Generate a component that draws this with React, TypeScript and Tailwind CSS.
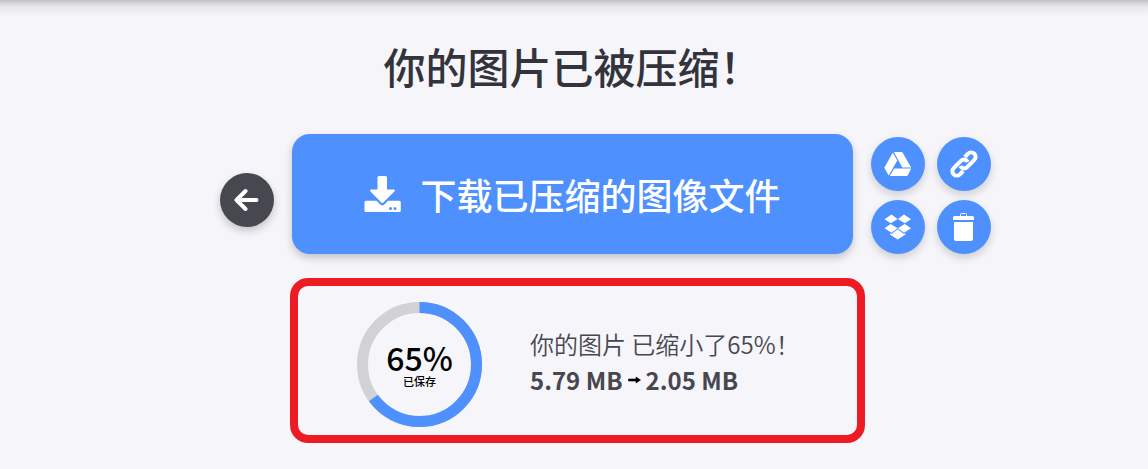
import React from "react";

const SAVED = 65;

function BackIcon() {
  return (
    <svg className="h-6 w-[26px]" viewBox="0 0 26 24" fill="none" stroke="currentColor" strokeWidth="4" strokeLinecap="round" strokeLinejoin="round" aria-hidden="true">
      <path d="M11.500 3 L2.500 12 L11.500 21 M3 12 H22.500" />
    </svg>
  );
}

function DownloadIcon() {
  return (
    <svg className="h-9 w-[37px] shrink-0" viewBox="0 0 37 36" fill="currentColor" aria-hidden="true">
      <path d="M15 0h6.500a1.500 1.500 0 0 1 1.500 1.500V13.500h6.900a1 1 0 0 1 .7 1.700L19.400 26.600a1.500 1.500 0 0 1-2.100 0L6.300 15.200a1 1 0 0 1 .7-1.700H13.500V1.500A1.500 1.500 0 0 1 15 0Z" />
      <path fillRule="evenodd" d="M2 24.800H12.600l3.100 3.300a3.600 3.600 0 0 0 5.200 0l3.100-3.300H35.300A1.500 1.500 0 0 1 36.800 26.300V34.500A1.500 1.500 0 0 1 35.300 36H2A1.500 1.500 0 0 1 .5 34.500V26.300A1.500 1.500 0 0 1 2 24.800ZM26.500 31a1.500 1.500 0 1 0 0 3a1.500 1.500 0 0 0 0-3ZM31 31a1.500 1.500 0 1 0 0 3a1.500 1.500 0 0 0 0-3Z" />
    </svg>
  );
}

function DriveIcon() {
  return (
    <svg className="h-6 w-7" viewBox="0 0 28 24" fill="currentColor" aria-hidden="true">
      <path d="M8.700 0.800 L13.300 8.500 L4.700 23.500 L0.300 15.700Z" />
      <path d="M9.800 0H18.200L27.200 15.400H18.300Z" />
      <path d="M10.200 16.400H27.200L23.400 24H5.800Z" />
    </svg>
  );
}

function DropboxIcon() {
  return (
    <svg className="h-[26px] w-7" viewBox="0 0 28 26" fill="currentColor" aria-hidden="true">
      <path d="M7.500 0.500L13.600 5 6.700 9.300 0.500 5.200Z" />
      <path d="M20 0.500L13.900 5 20.800 9.300 27 5.200Z" />
      <path d="M6.700 9.900L13.600 14.200 7.500 18.700 0.500 14.200Z" />
      <path d="M20.800 9.900L13.900 14.200 20 18.700 27 14.200Z" />
      <path d="M13.700 15.300L20 20 21.500 19.200V20.600L13.700 25.500 6 20.600V19.200L7.500 20Z" />
    </svg>
  );
}

function LinkIcon() {
  return (
    <svg className="size-7" viewBox="-14 -14 28 28" fill="none" stroke="currentColor" strokeWidth="4" aria-hidden="true">
      <g transform="rotate(-45)">
        <path d="M5.500 -4.400H10.200A4.400 4.400 0 0 1 10.200 4.400H0A4.400 4.400 0 0 1 -4.200 -1.200" />
        <path d="M-5.500 4.400H-10.200A4.400 4.400 0 0 1 -10.200 -4.400H0A4.400 4.400 0 0 1 4.200 1.200" />
      </g>
    </svg>
  );
}

function TrashIcon() {
  return (
    <svg className="h-7 w-[22px]" viewBox="0 0 22 28" fill="currentColor" aria-hidden="true">
      <path d="M7.500 3.500V1.500a1 1 0 0 1 1-1h4a1 1 0 0 1 1 1v2" fill="none" stroke="currentColor" />
      <path d="M1.500 3h18a1.500 1.500 0 0 1 1.500 1.500V7H0V4.500A1.500 1.500 0 0 1 1.500 3ZM1 9h19v17a2 2 0 0 1-2 2H3a2 2 0 0 1-2-2Z" />
    </svg>
  );
}

function RoundButton({ label, children }: { label: string; children: React.ReactNode }) {
  return (
    <button type="button" aria-label={label} className="flex size-[54px] items-center justify-center rounded-full bg-[#4d90fe] text-white shadow-[0_4px_9px_rgba(0,0,0,0.16)]">
      {children}
    </button>
  );
}

function SavedRing() {
  return (
    <div className="grid size-[125px] shrink-0 place-items-center">
      <svg className="col-start-1 row-start-1 size-full -rotate-90" viewBox="0 0 125 125" fill="none" strokeWidth="11" aria-hidden="true">
        <circle cx="62.5" cy="62.5" r="57" stroke="#d1d2d4" />
        <circle cx="62.5" cy="62.5" r="57" stroke="#4d90fe" pathLength="100" strokeDasharray={`${SAVED} 100`} />
      </svg>
      <div className="col-start-1 row-start-1 text-center text-black">
        <p className="text-[32px] leading-8 font-medium">{`${SAVED}%`}</p>
        <p className="text-[11px] leading-4 font-medium">已保存</p>
      </div>
    </div>
  );
}

export default function App() {
  return (
    <div className="min-h-screen bg-[#f5f5fa] pr-[3px] font-['Noto_Sans_CJK_SC',sans-serif] text-[#47474f]">
      <div className="-mr-[3px] h-4 bg-linear-to-b from-[#c0c0c5] via-[#e6e6eb] via-40% to-[#f5f5fa]" />
      <main className="flex flex-col items-center pt-5">
        <h1 className="text-[42px] leading-[60px] font-medium text-[#33333b]">你的图片已被压缩！</h1>

        <div className="mt-[38px] grid w-full grid-cols-[1fr_auto_1fr] items-center gap-[18px]">
          <button type="button" aria-label="返回" className="mt-3 flex size-[54px] items-center justify-center justify-self-end rounded-full bg-[#47474f] text-white shadow-[0_4px_9px_rgba(0,0,0,0.2)]">
            <BackIcon />
          </button>
          <a href="#download" className="flex h-[120px] w-[561px] items-center justify-center gap-[19px] rounded-[18px] bg-[#4d90fe] text-[36px] leading-[52px] font-medium text-white shadow-[0_4px_9px_rgba(0,0,0,0.2)]">
            <DownloadIcon />
            下载已压缩的图像文件
          </a>
          <div className="grid grid-cols-2 gap-x-3 gap-y-[9px] justify-self-start pt-[3px]">
            <RoundButton label="保存到 Google Drive"><DriveIcon /></RoundButton>
            <RoundButton label="复制链接"><LinkIcon /></RoundButton>
            <RoundButton label="保存到 Dropbox"><DropboxIcon /></RoundButton>
            <RoundButton label="删除"><TrashIcon /></RoundButton>
          </div>
        </div>

        <section className="mt-6 ml-[10px] flex h-[165px] w-[575px] items-center gap-12 rounded-[18px] border-8 border-[#ed1c24] pt-2 pl-[59px]">
          <SavedRing />
          <div className="pb-[6px] text-2xl leading-9">
            <p className="font-[350]">{`你的图片 已缩小了${SAVED}%！`}</p>
            <p className="flex items-center gap-1 font-bold">
              5.79 MB
              <svg className="h-3 w-[15px]" viewBox="0 0 15 12" fill="#000" role="img" aria-label="到">
                <path d="M1.500 5h7.500V3l4.500 3-4.500 3V7H1.500Z" stroke="#000" strokeWidth="0.600" strokeLinejoin="round" />
              </svg>
              2.05 MB
            </p>
          </div>
        </section>
      </main>
    </div>
  );
}
